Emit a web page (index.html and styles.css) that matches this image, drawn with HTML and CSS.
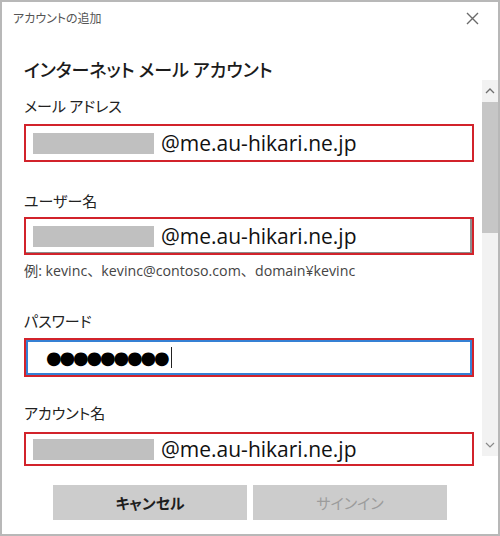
FILE: index.html
```html
<!DOCTYPE html>
<html lang="ja">
<head>
<meta charset="utf-8">
<title>アカウントの追加</title>
<link rel="stylesheet" href="styles.css">
</head>
<body>
<div class="window">
  <div class="titlebar">
    <span class="title">アカウントの追加</span>
    <svg class="close" width="13" height="13" viewBox="0 0 13 13"><path d="M1 1L12 12M12 1L1 12" stroke="#6a6a6a" stroke-width="1.4" fill="none"/></svg>
  </div>
  <h1 class="heading">インターネット メール アカウント</h1>
  <div class="main">
    <div class="form">
      <div class="label l1">メール アドレス</div>
      <div class="field f1"><span class="mask"></span><span class="value">@me.au-hikari.ne.jp</span></div>
      <div class="label l2">ユーザー名</div>
      <div class="field f2 user"><span class="mask"></span><span class="value">@me.au-hikari.ne.jp</span></div>
      <div class="hint">例: kevinc、kevinc@contoso.com、domain¥kevinc</div>
      <div class="label l3">パスワード</div>
      <div class="field f3 focus"><span class="dots">●●●●●●●●●</span><span class="caret"></span></div>
      <div class="label l4">アカウント名</div>
      <div class="field f4"><span class="mask"></span><span class="value">@me.au-hikari.ne.jp</span></div>
    </div>
    <div class="scrollbar">
      <div class="arrow up"><svg width="10" height="6" viewBox="0 0 10 6"><path d="M1 5L5 1L9 5" stroke="#6f6f6f" stroke-width="1.3" fill="none"/></svg></div>
      <div class="thumb"></div>
      <div class="track"></div>
      <div class="arrow down"><svg width="10" height="6" viewBox="0 0 10 6"><path d="M1 1L5 5L9 1" stroke="#8a8a8a" stroke-width="1.2" fill="none"/></svg></div>
    </div>
  </div>
  <div class="buttons">
    <div class="btn primary">キャンセル</div>
    <div class="btn disabled">サインイン</div>
  </div>
</div>
</body>
</html>
```
FILE: styles.css
```css
html, body {
  margin: 0;
  padding: 0;
  background: #ffffff;
}
body {
  font-family: "Noto Sans CJK JP", "Open Sans", sans-serif;
  font-feature-settings: "palt";
  color: #222;
}
.window {
  width: 500px;
  height: 536px;
  box-sizing: border-box;
  border: 2px solid #b8b8b8;
  background: #fff;
  display: flex;
  flex-direction: column;
}
.titlebar {
  height: 32px;
  display: flex;
  align-items: center;
  justify-content: space-between;
  padding: 0 19px 0 11px;
}
.title {
  font-size: 12px;
  line-height: 16px;
  color: #555;
}
.close {
  display: block;
}
.heading {
  margin: 0;
  padding: 24px 0 0 22px;
  font-size: 18px;
  line-height: 22px;
  font-weight: 500;
  color: #1b1b1b;
}
.main {
  display: grid;
  grid-template-columns: 1fr 16px;
}
.form {
  padding: 0 8px 0 22px;
  display: flex;
  flex-direction: column;
}
.label {
  font-size: 15px;
  line-height: 20px;
  color: #222;
}
.l1 { margin-top: 16px; }
.l2 { margin-top: 29px; }
.l3 { margin-top: 30px; }
.l4 { margin-top: 26px; }
.field {
  box-sizing: border-box;
  border: 2px solid #d2232b;
  display: flex;
  align-items: center;
  padding-left: 7px;
  background: #fff;
}
.f1 { margin-top: 8px; height: 38px; }
.f2 { margin-top: 6px; height: 38px; }
.f3 { margin-top: 7px; height: 39px; }
.f4 { margin-top: 9px; height: 34px; }
.user {
  box-shadow: inset -2px -1px 0 #8c8c8c;
}
.field.focus {
  box-shadow: inset 0 0 0 2px #3580d4;
  padding-left: 20px;
}
.mask {
  width: 121px;
  height: 21px;
  background: #c0c0c0;
  flex: none;
}
.value {
  margin-left: 7px;
  font-family: "Open Sans", sans-serif;
  font-size: 21px;
  line-height: 28px;
  color: #111;
}
.dots {
  font-family: "DejaVu Sans", sans-serif;
  font-size: 18px;
  line-height: 20px;
  letter-spacing: -2.2px;
  color: #000;
}
.caret {
  width: 1px;
  height: 21px;
  background: #222;
  margin-left: 3px;
}
.hint {
  margin-top: 6px;
  font-family: "Open Sans", "Noto Sans CJK JP", sans-serif;
  font-feature-settings: normal;
  font-size: 14.2px;
  line-height: 20px;
  color: #444;
}
.scrollbar {
  align-self: start;
  height: 376px;
  display: flex;
  flex-direction: column;
  background: #f2f2f2;
}
.arrow {
  height: 22px;
  display: flex;
  align-items: center;
  justify-content: center;
}
.thumb {
  height: 131px;
  background: #c6c6c6;
}
.track {
  flex: 1;
}
.buttons {
  margin-top: 19px;
  display: flex;
  justify-content: center;
  gap: 6px;
}
.btn {
  width: 194px;
  height: 35px;
  background: #cccccc;
  display: flex;
  align-items: center;
  justify-content: center;
  font-size: 15px;
}
.primary {
  color: #1e1e1e;
  font-weight: bold;
}
.disabled {
  color: #9c9c9c;
}
```
